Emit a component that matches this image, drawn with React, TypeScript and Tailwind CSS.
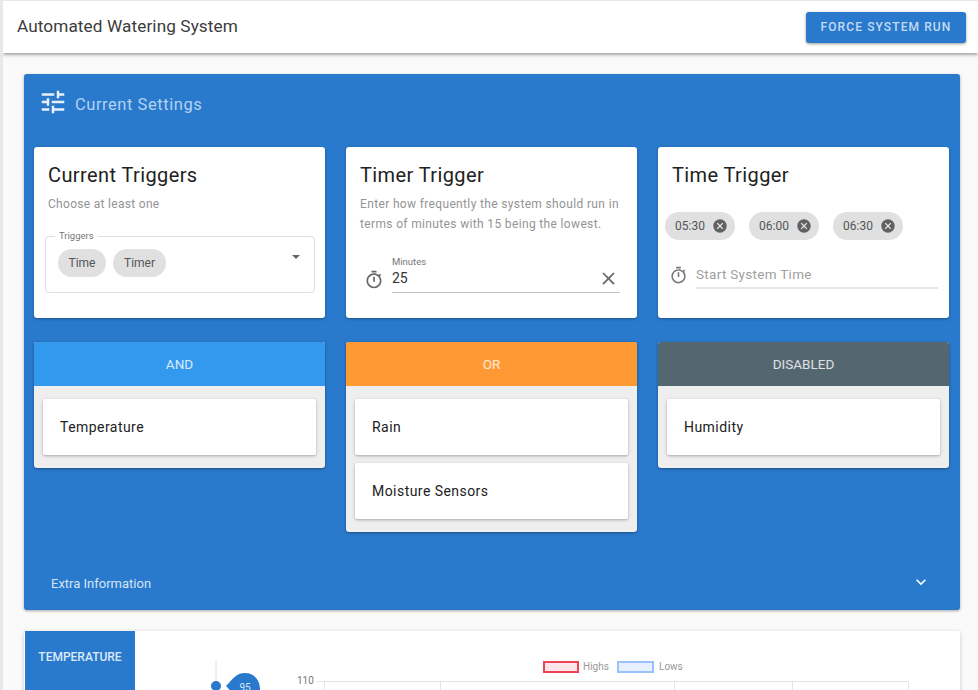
import { ReactElement, ReactNode } from 'react'

const TUNE = 'M3 17v2h6v-2H3zM3 5v2h10V5H3zm10 16v-2h8v-2h-8v-2h-2v6h2zM7 9v2H3v2h4v2h2V9H7zm14 4v-2H11v2h10zm-6-4h2V7h4V5h-4V3h-2v6z'
const TIMER = 'M15 1H9v2h6V1zm-4 13h2V8h-2v6zm8.03-6.61l1.42-1.42c-.43-.51-.9-.99-1.41-1.41l-1.42 1.42C16.07 4.74 14.12 4 12 4c-4.97 0-9 4.03-9 9s4.02 9 9 9 9-4.03 9-9c0-2.12-.74-4.07-1.97-5.61zM12 20c-3.87 0-7-3.13-7-7s3.13-7 7-7 7 3.13 7 7-3.13 7-7 7z'
const CANCEL = 'M12 2C6.47 2 2 6.47 2 12s4.47 10 10 10 10-4.47 10-10S17.53 2 12 2zm5 13.59L15.59 17 12 13.41 8.41 17 7 15.59 10.59 12 7 8.41 8.41 7 12 10.59 15.59 7 17 8.41 13.41 12 17 15.59z'
const CLOSE = 'M19 6.41L17.59 5 12 10.59 6.41 5 5 6.41 10.59 12 5 17.59 6.41 19 12 13.41 17.59 19 19 17.59 13.41 12z'
const EXPAND = 'M16.59 8.59L12 13.17 7.41 8.59 6 10l6 6 6-6z'

function Icon({ d, className }: { d: string; className: string }): ReactElement {
  return (
    <svg viewBox="0 0 24 24" fill="currentColor" className={className}>
      <path d={d} />
    </svg>
  )
}

function Card({ title, children }: { title: string; children: ReactNode }): ReactElement {
  return (
    <div className="h-[171px] rounded-[3px] bg-white pt-[14px] shadow-[0_1px_3px_rgba(0,0,0,0.3)]">
      <h2 className="pl-[14px] text-[20px] leading-[28px] tracking-[0.4px] text-[#212121]">{title}</h2>
      {children}
    </div>
  )
}

function Chip({ label }: { label: string }): ReactElement {
  return (
    <span className="flex h-[28px] w-[70px] items-center rounded-full bg-[#e0e0e0] pl-[10px] text-[12px] text-[#555]">
      {label}
      <Icon d={CANCEL} className="ml-[7px] h-[16px] w-[16px] text-[#616161]" />
    </span>
  )
}

function Column({ title, color, items }: { title: string; color: string; items: string[] }): ReactElement {
  return (
    <div className="self-start overflow-hidden rounded-[3px] bg-[#eeeeee] shadow-[0_1px_3px_rgba(0,0,0,0.35)]">
      <div className={`flex h-[44px] items-center justify-center text-[13.5px] text-white/80 ${color}`}>{title}</div>
      <div className="flex flex-col gap-[8px] px-[9px] pt-[13px] pb-[13px]">
        {items.map(item => (
          <div
            key={item}
            className="flex h-[56px] items-center rounded-[2px] bg-white pl-[17px] text-[14px] tracking-[0.45px] text-[#212121] shadow-[0_1px_3px_rgba(0,0,0,0.3)]"
          >
            {item}
          </div>
        ))}
      </div>
    </div>
  )
}

export default function App(): ReactElement {
  return (
    <div className="h-screen overflow-hidden border-t border-l-[3px] border-[#e8e8e8] bg-[#fafafa] font-['Roboto',sans-serif]">
      <header className="flex h-[52px] items-center justify-between bg-white pr-[12px] pl-[14px] shadow-[0_1px_4px_rgba(0,0,0,0.5)]">
        <h1 className="text-[17.2px] tracking-[0.1px] text-[#3c3c3c]">Automated Watering System</h1>
        <button className="h-[31px] w-[160px] rounded-[3px] bg-[#2979cc] text-[12px] font-medium tracking-[1.1px] text-[#c4daf2] shadow-[0_1px_3px_rgba(0,0,0,0.4)]">
          FORCE SYSTEM RUN
        </button>
      </header>

      <main className="flex flex-col gap-[21px] pt-[21px] pr-[18px] pl-[21px]">
        <section className="h-[536px] rounded-[3px] bg-[#2979cc] shadow-[0_1px_3px_rgba(0,0,0,0.35)]">
          <div className="flex h-[73px] items-start gap-[7px] pt-[13px] pl-[14px] text-[#b4d2f2]">
            <Icon d={TUNE} className="h-[30px] w-[30px] text-[#e8f1fb]" />
            <span className="mt-[6px] text-[16.5px] tracking-[0.55px]">Current Settings</span>
          </div>

          <div className="grid grid-cols-3 gap-x-[21px] gap-y-[24px] pr-[11px] pl-[10px]">
            <Card title="Current Triggers">
              <p className="mt-[6px] pl-[14px] text-[12px] tracking-[0.3px] text-[#949494]">Choose at least one</p>
              <fieldset className="mt-[18px] mr-[10px] ml-[11px] h-[62px] rounded-[4px] border border-[#dedede] pr-[14px] pl-[12px]">
                <legend className="ml-[-3px] px-[4px] text-[9.5px] leading-[10px] text-[#777]">Triggers</legend>
                <div className="mt-[8px] flex items-start justify-between">
                  <div className="flex gap-[7px]">
                    <span className="flex h-[28px] w-[48px] items-center justify-center rounded-full bg-[#e0e0e0] text-[12px] text-[#555]">Time</span>
                    <span className="flex h-[28px] w-[53px] items-center justify-center rounded-full bg-[#e0e0e0] text-[12px] text-[#555]">Timer</span>
                  </div>
                  <span className="mt-[6px] h-0 w-0 border-x-[4px] border-t-[4px] border-x-transparent border-t-[#666]" />
                </div>
              </fieldset>
            </Card>

            <Card title="Timer Trigger">
              <p className="mt-[5px] pr-[8px] pl-[14px] text-[12px] leading-[20px] tracking-[0.35px] text-[#949494]">
                Enter how frequently the system should run in terms of minutes with 15 being the lowest.
              </p>
              <div className="mt-[22px] flex items-end pr-[17px] pl-[18px]">
                <Icon d={TIMER} className="mb-[3px] h-[20px] w-[20px] shrink-0 text-[#666]" />
                <div className="ml-[8px] flex-1 border-b border-[#c4c4c4] pb-[5px]">
                  <div className="mb-[2px] text-[9.5px] leading-[12px] text-[#777]">Minutes</div>
                  <div className="flex h-[17px] items-center justify-between text-[14px] text-[#333]">
                    25
                    <Icon d={CLOSE} className="mr-[1px] h-[21px] w-[21px] text-[#666]" />
                  </div>
                </div>
              </div>
            </Card>

            <Card title="Time Trigger">
              <div className="mt-[23px] flex gap-[14px] pl-[7px]">
                <Chip label="05:30" />
                <Chip label="06:00" />
                <Chip label="06:30" />
              </div>
              <div className="mt-[21px] flex items-center pr-[11px] pl-[11px]">
                <Icon d={TIMER} className="h-[19px] w-[19px] shrink-0 text-[#777]" />
                <div className="ml-[8px] flex h-[28px] flex-1 items-center border-b-2 border-[#e6e6e6] text-[13.5px] tracking-[0.3px] text-[#a0a0a0]">
                  Start System Time
                </div>
              </div>
            </Card>

            <Column title="AND" color="bg-[#3399ee]" items={['Temperature']} />
            <Column title="OR" color="bg-[#ff9933]" items={['Rain', 'Moisture Sensors']} />
            <Column title="DISABLED" color="bg-[#546771]" items={['Humidity']} />
          </div>

          <div className="mt-[42px] flex items-center justify-between pr-[29px] pl-[27px] text-[13px] text-[#d5e5f7]">
            <span>Extra Information</span>
            <Icon d={EXPAND} className="mt-[-4px] h-[20px] w-[20px] text-white" />
          </div>
        </section>

        <section className="flex h-[200px] rounded-[2px] bg-white shadow-[0_1px_4px_rgba(0,0,0,0.2)]">
          <div className="ml-[1px] h-full w-[110px] bg-[#2979cc] pt-[17px] text-center text-[12px] font-medium text-[#dce9f8]">TEMPERATURE</div>
          <svg viewBox="0 0 825 200" className="h-[200px] w-[825px] font-['Roboto',sans-serif]">
            <line x1="81" y1="29" x2="81" y2="60" stroke="#e0e0e0" />
            <circle cx="81" cy="55" r="5" fill="#2979cc" />
            <path d="M91 55 C98 48 101 42 110 42 C119 42 125 49 125 58 L125 70 L105 70 C98 64 96 60 91 55Z" fill="#2979cc" />
            <text x="110" y="60" fontSize="10" fill="#d5e5f7" textAnchor="middle">95</text>
            <rect x="409" y="31" width="34" height="10" fill="#fde6e9" stroke="#ee4455" strokeWidth="2" />
            <text x="448" y="39" fontSize="10" fill="#999">Highs</text>
            <rect x="483" y="31" width="35" height="10" fill="#e6f0ff" stroke="#99c2ff" strokeWidth="2" />
            <text x="524" y="39" fontSize="10" fill="#999">Lows</text>
            <text x="162" y="53" fontSize="10" fill="#777">110</text>
            <line x1="182" y1="50.5" x2="773" y2="50.5" stroke="#e4e4e4" />
            <line x1="189.5" y1="50" x2="189.5" y2="200" stroke="#e4e4e4" />
            <line x1="305.5" y1="50" x2="305.5" y2="200" stroke="#e4e4e4" />
            <line x1="539.5" y1="50" x2="539.5" y2="200" stroke="#e4e4e4" />
            <line x1="657.5" y1="50" x2="657.5" y2="200" stroke="#e4e4e4" />
            <line x1="773.5" y1="50" x2="773.5" y2="200" stroke="#e4e4e4" />
          </svg>
        </section>
      </main>
    </div>
  )
}
